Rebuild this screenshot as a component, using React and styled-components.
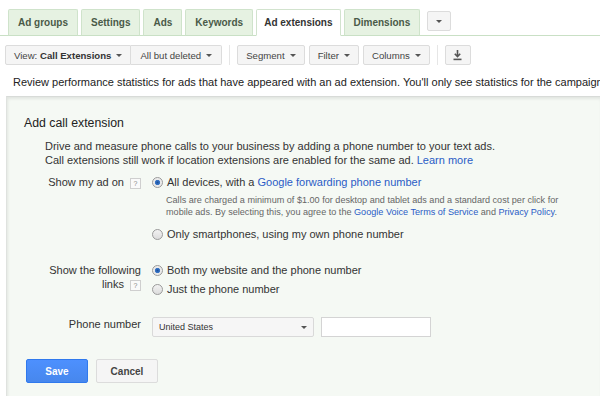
import React from 'react';
import styled, { createGlobalStyle } from 'styled-components';

const GlobalStyle = createGlobalStyle`
  html, body {
    margin: 0;
    padding: 0;
    background: #fff;
    font-family: 'Liberation Sans', Arial, sans-serif;
    overflow: hidden;
  }
`;

const tabs = ['Ad groups', 'Settings', 'Ads', 'Keywords', 'Ad extensions', 'Dimensions'];

export default function App() {
  return (
    <>
      <GlobalStyle />
      <Page>
        <TabBar>
          {tabs.map((t) => (
            <Tab key={t} active={t === 'Ad extensions'}>{t}</Tab>
          ))}
          <MoreTab><Caret /></MoreTab>
        </TabBar>

        <Toolbar>
          <Group>
            <ToolButton first>View:&nbsp;<b>Call Extensions</b><Caret /></ToolButton>
            <ToolButton joined>All but deleted<Caret /></ToolButton>
          </Group>
          <Divider />
          <ToolButton>Segment<Caret /></ToolButton>
          <ToolButton>Filter<Caret /></ToolButton>
          <ToolButton>Columns<Caret /></ToolButton>
          <Divider />
          <IconButton>
            <svg width="11" height="12" viewBox="0 0 11 12">
              <path d="M5.5 1v6M2.8 4.8l2.7 2.9 2.7-2.9" stroke="#555" strokeWidth="1.6" fill="none" />
              <rect x="1.5" y="9.6" width="8" height="1.6" fill="#555" />
            </svg>
          </IconButton>
        </Toolbar>

        <Info>
          Review performance statistics for ads that have appeared with an ad extension. You'll only see statistics for the campaigns that have call extensions.
        </Info>

        <Panel>
          <Title>Add call extension</Title>
          <Intro>
            Drive and measure phone calls to your business by adding a phone number to your text ads.<br />
            Call extensions still work if location extensions are enabled for the same ad. <Link>Learn more</Link>
          </Intro>

          <FormRow top={8}>
            <Label>Show my ad on<Help>?</Help></Label>
            <Controls>
              <Option>
                <Radio checked />
                <span>All devices, with a <Link>Google forwarding phone number</Link></span>
              </Option>
              <Note>
                Calls are charged a minimum of $1.00 for desktop and tablet ads and a standard cost per click for<br />
                mobile ads. By selecting this, you agree to the <Link>Google Voice Terms of Service</Link> and <Link>Privacy Policy</Link>.
              </Note>
              <Option top={9}>
                <Radio />
                <span>Only smartphones, using my own phone number</span>
              </Option>
            </Controls>
          </FormRow>

          <FormRow top={22}>
            <Label>Show the following<br />links<Help>?</Help></Label>
            <Controls>
              <Option>
                <Radio checked />
                <span>Both my website and the phone number</span>
              </Option>
              <Option top={5}>
                <Radio />
                <span>Just the phone number</span>
              </Option>
            </Controls>
          </FormRow>

          <FormRow top={21}>
            <Label>Phone number</Label>
            <Controls row>
              <Select>United States<Caret /></Select>
              <TextInput />
            </Controls>
          </FormRow>

          <Actions>
            <PrimaryButton>Save</PrimaryButton>
            <SecondaryButton>Cancel</SecondaryButton>
          </Actions>
        </Panel>
      </Page>
    </>
  );
}

const Page = styled.div`
  width: 600px;
  height: 396px;
  overflow: hidden;
  color: #222;
`;

const TabBar = styled.div`
  display: flex;
  align-items: flex-end;
  gap: 3px;
  height: 36px;
  padding-left: 8px;
  border-bottom: 1px solid #c9e0c5;
  box-sizing: border-box;
`;

const Tab = styled.div`
  height: 27px;
  box-sizing: border-box;
  margin-bottom: -1px;
  padding: 0 ${(p) => (p.active ? '7px' : '9px')};
  display: flex;
  align-items: center;
  font-size: 10px;
  font-weight: bold;
  white-space: nowrap;
  color: ${(p) => (p.active ? '#333' : '#4a5a48')};
  background: ${(p) => (p.active ? '#fff' : '#e6f2e2')};
  border: 1px solid ${(p) => (p.active ? '#d2e3ce' : '#cfe3cb')};
  border-bottom-color: ${(p) => (p.active ? '#fff' : '#c9e0c5')};
  border-radius: 2px 2px 0 0;
`;

const MoreTab = styled.div`
  width: 24px;
  height: 20px;
  box-sizing: border-box;
  margin: 0 0 4px 4px;
  display: flex;
  align-items: center;
  justify-content: center;
  background: #f5f5f5;
  border: 1px solid #dcdcdc;
  border-radius: 2px;
`;

const Caret = styled.span`
  display: inline-block;
  margin-left: 5px;
  border-left: 3px solid transparent;
  border-right: 3px solid transparent;
  border-top: 3.5px solid #555;
  vertical-align: middle;
  ${MoreTab} & { margin-left: 0; }
`;

const Toolbar = styled.div`
  display: flex;
  align-items: center;
  gap: 4px;
  padding: 9px 0 0 5px;
  height: 20px;
`;

const Group = styled.div`
  display: flex;
`;

const ToolButton = styled.div`
  height: 20px;
  box-sizing: border-box;
  padding: 0 ${(p) => (p.first ? '8px' : '8px')};
  display: flex;
  align-items: center;
  font-size: 9.6px;
  color: #444;
  white-space: nowrap;
  background: #f5f5f5;
  border: 1px solid #dcdcdc;
  border-radius: ${(p) => (p.first ? '2px 0 0 2px' : p.joined ? '0 2px 2px 0' : '2px')};
  ${(p) => p.joined && 'border-left: none; padding: 0 9px;'}
  b { color: #333; }
`;

const Divider = styled.div`
  width: 1px;
  height: 20px;
  margin: 0 3px;
  background: #e6e6e6;
`;

const IconButton = styled(ToolButton)`
  width: 26px;
  padding: 0;
  justify-content: center;
`;

const Info = styled.div`
  margin: 10px 0 0 13px;
  font-size: 11px;
  color: #222;
  white-space: nowrap;
  line-height: 14px;
`;

const Panel = styled.div`
  margin: 7px 0 0 6px;
  height: 320px;
  background: #f5f9f4;
  border-top: 1px solid #d8dbd8;
  border-left: 1px solid #dfe2df;
  box-shadow: inset 1px 2px 3px rgba(0, 0, 0, 0.08);
  padding: 19px 0 0 17px;
  box-sizing: border-box;
`;

const Title = styled.div`
  font-size: 12.3px;
  color: #222;
  line-height: 15px;
`;

const Intro = styled.div`
  margin: 8px 0 0 21px;
  font-size: 11px;
  line-height: 14px;
  color: #333;
`;

const Link = styled.span`
  color: #2a5cc6;
`;

const FormRow = styled.div`
  display: flex;
  margin-top: ${(p) => p.top}px;
  font-size: 11px;
  color: #333;
`;

const Label = styled.div`
  width: 117px;
  flex-shrink: 0;
  text-align: right;
  line-height: 14px;
`;

const Help = styled.span`
  display: inline-block;
  width: 9px;
  height: 9px;
  margin-left: 6px;
  border: 1px solid #cfcfcf;
  background: #fafafa;
  font-size: 7px;
  line-height: 9px;
  text-align: center;
  color: #888;
`;

const Controls = styled.div`
  margin-left: 11px;
  display: flex;
  flex-direction: ${(p) => (p.row ? 'row' : 'column')};
  gap: ${(p) => (p.row ? '7px' : '0')};
`;

const Option = styled.div`
  display: flex;
  align-items: center;
  gap: 4px;
  line-height: 14px;
  margin-top: ${(p) => p.top || 0}px;
  white-space: nowrap;
`;

const Radio = styled.span`
  width: 9px;
  height: 9px;
  border-radius: 50%;
  border: 1px solid #9a9a9a;
  background: ${(p) =>
    p.checked
      ? 'radial-gradient(circle, #1a4f9c 0, #3b78c8 2.3px, #e8e8e8 3px, #f4f4f4 100%)'
      : 'linear-gradient(#f2f2f2, #dcdcdc)'};
  flex-shrink: 0;
`;

const Note = styled.div`
  margin: 5px 0 0 14px;
  font-size: 9.1px;
  line-height: 12px;
  color: #666;
  white-space: nowrap;
`;

const Select = styled.div`
  width: 162px;
  height: 20px;
  box-sizing: border-box;
  padding: 0 6px;
  display: flex;
  align-items: center;
  justify-content: space-between;
  font-size: 9px;
  color: #333;
  background: #f6f6f6;
  border: 1px solid #d9d9d9;
  border-radius: 2px;
`;

const TextInput = styled.div`
  width: 110px;
  height: 20px;
  box-sizing: border-box;
  background: #fff;
  border: 1px solid #d4d4d4;
`;

const Actions = styled.div`
  display: flex;
  gap: 8px;
  margin-top: 22px;
  margin-left: 2px;
`;

const PrimaryButton = styled.div`
  width: 62px;
  height: 24px;
  box-sizing: border-box;
  display: flex;
  align-items: center;
  justify-content: center;
  font-size: 10px;
  font-weight: bold;
  color: #fff;
  background: linear-gradient(#4d90fe, #4787ed);
  border: 1px solid #3079ed;
  border-radius: 2px;
`;

const SecondaryButton = styled(PrimaryButton)`
  color: #444;
  background: #f5f5f5;
  border-color: #dcdcdc;
`;
